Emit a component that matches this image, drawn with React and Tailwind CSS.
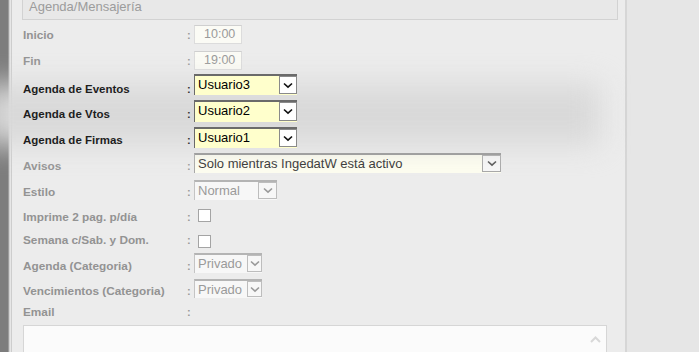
import React from "react";

function Chevron({ color = "#111", w = 10 }) {
  return (
    <svg width={w} height="7" viewBox="0 0 10 7" fill="none">
      <path d="M1 1.5 L5 5.2 L9 1.5" stroke={color} strokeWidth="1.6" />
    </svg>
  );
}

const variants = {
  user: {
    box: "bg-[#ffffcc] border-t-2 border-l border-t-[#6a6a6a] border-l-[#6a6a6a] text-black",
    btn: "bg-white border border-[#8a8a8a]",
    chev: "#111",
  },
  avisos: {
    box: "bg-[#fdfdf0] border-t-2 border-l border-t-[#8c8c8c] border-l-[#a8a8a8] text-[#333]",
    btn: "bg-[#f7f7f7] border border-[#a8a8a8]",
    chev: "#555",
  },
  disabled: {
    box: "bg-[#f7f7f7] border-t-2 border-l border-t-[#b4b4b4] border-l-[#c4c4c4] text-[#9a9a9a]",
    btn: "bg-[#f7f7f7] border border-[#bdbdbd]",
    chev: "#9a9a9a",
  },
};

function Select({ value, w, h, bw, variant }) {
  const v = variants[variant];
  return (
    <div className={`flex items-start ${v.box}`} style={{ width: w, height: h }}>
      <div className="flex-1 pl-[3px] text-[13px] leading-[17px] whitespace-nowrap overflow-hidden">{value}</div>
      <div
        className={`flex items-center justify-center ${v.btn}`}
        style={{ width: bw, height: h - 3 }}
      >
        <Chevron color={v.chev} />
      </div>
    </div>
  );
}

function Row({ label, dark, h, lmt = 0, cmt = 0, children, noColon }) {
  const labelCls = dark
    ? "text-[11.5px] font-bold text-[#1e1e1e]"
    : "text-[11.8px] font-bold text-[#939393]";
  return (
    <div className="flex items-start shrink-0" style={{ height: h }}>
      <div
        className={`w-[164px] leading-[13px] whitespace-nowrap ${labelCls}`}
        style={{ marginTop: lmt }}
      >
        {label}
      </div>
      <div
        className={`w-[7px] text-[11px] font-bold leading-[13px] ${dark ? "text-[#333]" : "text-[#9a9a9a]"}`}
        style={{ marginTop: lmt }}
      >
        {noColon ? "" : ":"}
      </div>
      <div style={{ marginTop: cmt }}>{children}</div>
    </div>
  );
}

function TimeInput({ value }) {
  return (
    <div className="w-[48px] h-[19px] bg-[#fbfbf5] border border-[#dcdcdc] border-t-[#cfcfcf] text-[12.5px] leading-[17px] text-[#9a9a9a] pl-[9px]">
      {value}
    </div>
  );
}

function Check() {
  return <div className="ml-[4px] w-[13px] h-[13px] bg-white border border-[#a4a4a4]" />;
}

export default function App() {
  return (
    <div className="w-[699px] h-[352px] overflow-hidden flex bg-[#ececec] font-['Liberation_Sans',Arial,sans-serif]">
      <div className="w-[8px] bg-[#7d7d7d]" />
      <div className="w-[1px] bg-[#9c9c9c]" />
      <div className="w-[1px] bg-[#d2d2d2]" />
      <div className="w-[1px] bg-[#e6e6e6]" />
      <div className="w-[1px] bg-[#cdcdcd]" />
      <div className="flex-1 pl-[10px] flex flex-col">
        <div className="shrink-0 w-[596px] h-[20px] border-x border-b border-[#d2d2d2] bg-[#e8e8e8] overflow-hidden">
          <div className="pl-[6px] -mt-[1px] text-[13px] leading-[15px] text-[#9c9c9c]">Agenda/Mensajería</div>
        </div>
        <div className="shrink-0 pl-[1px] pt-[5px]">
          <Row label="Inicio" h={26} lmt={4}>
            <TimeInput value="10:00" />
          </Row>
          <Row label="Fin" h={23} lmt={4}>
            <TimeInput value="19:00" />
          </Row>
          <div className="relative">
            <div className="absolute left-[-40px] right-[25px] top-[10px] bottom-[8px] bg-[#d9d9d9] blur-[14px]" />
            <div className="relative">
              <Row label="Agenda de Eventos" dark h={26} lmt={9}>
                <Select value="Usuario3" w={103} h={21} bw={18} variant="user" />
              </Row>
              <Row label="Agenda de Vtos" dark h={27} lmt={8}>
                <Select value="Usuario2" w={103} h={22} bw={18} variant="user" />
              </Row>
              <Row label="Agenda de Firmas" dark h={26} lmt={7}>
                <Select value="Usuario1" w={103} h={21} bw={18} variant="user" />
              </Row>
            </div>
          </div>
          <Row label="Avisos" h={27} lmt={7}>
            <Select value="Solo mientras IngedatW está activo" w={307} h={20} bw={19} variant="avisos" />
          </Row>
          <Row label="Estilo" h={29} lmt={6}>
            <Select value="Normal" w={83} h={20} bw={19} variant="disabled" />
          </Row>
          <Row label="Imprime 2 pag. p/día" h={25} lmt={2}>
            <Check />
          </Row>
          <Row label="Semana c/Sab. y Dom." h={19} lmt={0} cmt={1}>
            <Check />
          </Row>
          <Row label="Agenda (Categoria)" h={26} lmt={7}>
            <Select value="Privado" w={68} h={20} bw={15} variant="disabled" />
          </Row>
          <Row label="Vencimientos (Categoria)" h={26} lmt={6}>
            <Select value="Privado" w={68} h={19} bw={15} variant="disabled" />
          </Row>
          <Row label="Email" h={20} lmt={1} />
          <div className="w-[584px] h-[40px] bg-[#fbfbfb] border border-[#d6d6d6] flex justify-end pt-[10px] pr-[5px]">
            <svg width="11" height="7" viewBox="0 0 11 7" fill="none">
              <path d="M1 6 L5.5 1.5 L10 6" stroke="#d8d8d8" strokeWidth="2" />
            </svg>
          </div>
        </div>
      </div>
      <div className="w-[2px] bg-[#d6d6d6]" />
      <div className="w-[72px] bg-[#e6e6e6]" />
    </div>
  );
}
